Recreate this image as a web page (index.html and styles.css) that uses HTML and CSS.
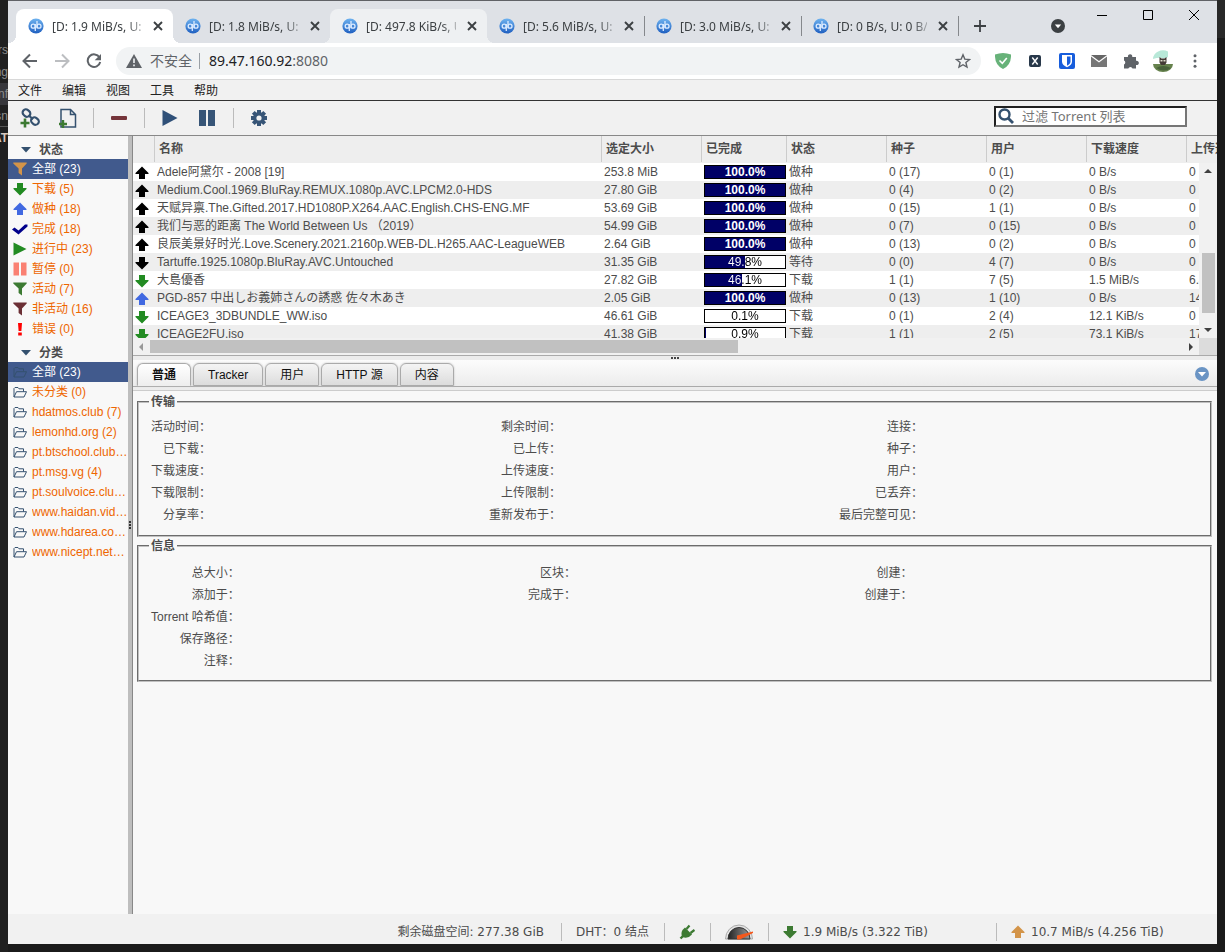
FILE: index.html
```
<!DOCTYPE html>
<html lang="zh-CN">
<head>
<meta charset="utf-8">
<title>[D: 1.9 MiB/s, U: 10.7 MiB/s] qBittorrent</title>
<link rel="stylesheet" href="styles.css">
</head>
<body>
<svg class="defs" aria-hidden="true">
  <defs>
    <linearGradient id="qbg" x1="0" y1="0" x2="0" y2="1"><stop offset="0" stop-color="#6fb3f0"/><stop offset="1" stop-color="#1f5fc0"/></linearGradient>
    <linearGradient id="dial" x1="0" y1="0" x2="1" y2="0"><stop offset="0" stop-color="#222"/><stop offset="1" stop-color="#999"/></linearGradient>
  </defs>
  <symbol id="qb" viewBox="0 0 16 16"><circle cx="8" cy="8" r="7.6" fill="url(#qbg)"/><g fill="none" stroke="#dcebff" stroke-width="1.3"><circle cx="5.2" cy="8.2" r="2"/><path d="M7.3 6v7M9 3v7.2"/><circle cx="11" cy="8.2" r="2"/></g></symbol>
  <symbol id="x" viewBox="0 0 16 16"><path d="M4 4l8 8M12 4l-8 8" stroke="#3c4043" stroke-width="1.9"/></symbol>
  <symbol id="up" viewBox="0 0 14 14"><path d="M7 .5L13.5 7V8H10v5H4V8H.5V7z" fill="currentColor"/></symbol>
  <symbol id="down" viewBox="0 0 14 14"><path d="M7 13.5L13.5 7V6H10V1H4v5H.5v1z" fill="currentColor"/></symbol>
  <symbol id="funnel" viewBox="0 0 14 14"><path d="M.3.5h13.4v1L9 6.5v7L5.6 11V6.500L.3 1.500z" fill="currentColor"/></symbol>
  <symbol id="folder" viewBox="0 0 14 14"><path d="M1 12V3.500l1-1h3l1 1.300h4.500V6.500M1 12l2.500-5.300H13.500L11 12z" fill="none" stroke="currentColor" stroke-width="1"/></symbol>
  <symbol id="tri" viewBox="0 0 10 6"><path d="M0 0h10L5 5.500z" fill="#34516f"/></symbol>
</svg>

<aside class="behind left" aria-hidden="true">
  <span>rs</span><span>ng</span><span class="lit">nf</span><span class="line">sn</span><b>AT</b>
</aside>

<div class="window">
  <header class="tabstrip">
    <nav class="browser-tabs" aria-label="标签页">
      <div class="btab current"><svg class="fav"><use href="#qb"/></svg><span>[D: 1.9 MiB/s, U: 10.7 MiB/s]</span><button aria-label="关闭"><svg><use href="#x"/></svg></button></div>
      <div class="btab"><svg class="fav"><use href="#qb"/></svg><span>[D: 1.8 MiB/s, U: 1.2 MiB/s]</span><button aria-label="关闭"><svg><use href="#x"/></svg></button></div>
      <div class="btab hover"><svg class="fav"><use href="#qb"/></svg><span>[D: 497.8 KiB/s, U: 1.0 MiB/s]</span><button aria-label="关闭"><svg><use href="#x"/></svg></button></div>
      <div class="btab ruled"><svg class="fav"><use href="#qb"/></svg><span>[D: 5.6 MiB/s, U: 1.2 MiB/s]</span><button aria-label="关闭"><svg><use href="#x"/></svg></button></div>
      <div class="btab ruled"><svg class="fav"><use href="#qb"/></svg><span>[D: 3.0 MiB/s, U: 1.2 MiB/s]</span><button aria-label="关闭"><svg><use href="#x"/></svg></button></div>
      <div class="btab ruled"><svg class="fav"><use href="#qb"/></svg><span>[D: 0 B/s, U: 0 B/s]</span><button aria-label="关闭"><svg><use href="#x"/></svg></button></div>
      <button class="newtab" aria-label="新标签页"><svg viewBox="0 0 14 14"><path d="M7 1v12M1 7h12" stroke="#3c4043" stroke-width="1.800"/></svg></button>
    </nav>
    <div class="wincontrols">
      <button class="search-tabs" aria-label="搜索标签页"><svg viewBox="0 0 14 14"><circle cx="7" cy="7" r="7" fill="#3c4043"/><path d="M3.800 5.500h6.400L7 9.300z" fill="#fff"/></svg></button>
      <button aria-label="最小化"><svg viewBox="0 0 10 10"><path d="M0 5.500h10" stroke="#000"/></svg></button>
      <button aria-label="最大化"><svg viewBox="0 0 10 10"><path d="M.5.5h9v9h-9z" fill="none" stroke="#000"/></svg></button>
      <button aria-label="关闭窗口"><svg viewBox="0 0 10 10"><path d="M0 0l10 10M10 0L0 10" stroke="#000"/></svg></button>
    </div>
  </header>

  <div class="navbar">
    <button aria-label="后退"><svg viewBox="0 0 16 16"><path d="M15 8H2M8 1.500L1.500 8 8 14.500" fill="none" stroke="#5f6368" stroke-width="2"/></svg></button>
    <button aria-label="前进"><svg viewBox="0 0 16 16"><path d="M1 8h13M8 1.500L14.500 8 8 14.500" fill="none" stroke="#bcbec1" stroke-width="2"/></svg></button>
    <button aria-label="重新加载"><svg viewBox="0 0 16 16"><path d="M13.500 4.500A6.300 6.300 0 1 0 14.200 9" fill="none" stroke="#5f6368" stroke-width="2"/><path d="M15 1v6.300H8.700z" fill="#5f6368"/></svg></button>
    <div class="omnibox">
      <svg class="warn" viewBox="0 0 16 14"><path d="M8 0l8 14H0z" fill="#5f6368"/><path d="M8 4.500v4.500M8 10.500v1.800" stroke="#f1f3f4" stroke-width="1.600"/></svg>
      <span class="insecure">不安全</span>
      <span class="url">89.47.160.92<i>:8080</i></span>
      <button aria-label="加入书签"><svg viewBox="0 0 16 16"><path d="M8 1.800l1.800 4.300 4.700.4-3.600 3 1.100 4.600L8 11.700l-4 2.400 1.100-4.600-3.600-3 4.700-.4z" fill="none" stroke="#5f6368" stroke-width="1.400"/></svg></button>
    </div>
    <div class="extensions">
      <button aria-label="AdGuard"><svg viewBox="0 0 16 16"><path d="M0 1.500Q4 .3 8 0q4 .3 8 1.500Q16.500 12 8 16-.5 12 0 1.500z" fill="#67b279"/><path d="M4.500 7.500L7.300 10.300 11.800 5" fill="none" stroke="#fff" stroke-width="1.600"/></svg></button>
      <button aria-label="X"><svg viewBox="0 0 16 16"><rect x="2" y="2" width="12" height="12" rx="2" fill="#28384a"/><path d="M5.300 4.500l5.400 7M10.700 4.500l-5.400 7" stroke="#fff" stroke-width="1.400"/></svg></button>
      <button aria-label="Bitwarden"><svg viewBox="0 0 16 16"><rect width="16" height="16" rx="2" fill="#175ddc"/><path d="M3 2h10v6.500q0 3.500-5 5.800-5-2.300-5-5.800z" fill="#fff"/><path d="M8 3.600h3.500v5Q11.500 11 8 12.700z" fill="#175ddc"/></svg></button>
      <button aria-label="邮件"><svg viewBox="0 0 16 16"><path d="M0 2h16L8 8z" fill="#666"/><path d="M0 3.500L8 9.500l8-6V14H0z" fill="#777"/></svg></button>
      <button aria-label="扩展程序"><svg viewBox="0 0 16 16"><path d="M1 4h4a2.200 2.200 0 1 1 4.200 0H13v3.800a2.200 2.200 0 1 1 0 4.200v3.500H9.500a2.200 2.200 0 0 0-4.200 0H1v-4a2.200 2.200 0 0 0 0-4z" fill="#5f6368"/></svg></button>
      <button class="profile" aria-label="个人资料"><svg viewBox="0 0 22 22"><path d="M1 9A10 9 0 0 1 16 1.500L16 7q-3 2-6 1T1 9z" fill="#b8e8d8"/><path d="M1 14h20a10 8 0 0 1-20 0z" fill="#66824d"/><path d="M4 18q7-4 15 0-7 5-15 0z" fill="#48623a"/><path d="M7.500 7l2 1.500h3L14.500 7v5.500L13 15H9l-1.500-2.500z" fill="#443b36"/><path d="M8.500 10h2v1.500h-2zM11.500 10h2v1.500h-2z" fill="#ddc"/></svg></button>
      <button aria-label="菜单"><svg viewBox="0 0 16 16"><g fill="#5f6368"><circle cx="8" cy="2.800" r="1.500"/><circle cx="8" cy="8" r="1.500"/><circle cx="8" cy="13.200" r="1.500"/></g></svg></button>
    </div>
  </div>

  <nav class="menubar">
    <a href="#file">文件</a><a href="#edit">编辑</a><a href="#view">视图</a><a href="#tools">工具</a><a href="#help">帮助</a>
  </nav>

  <div class="toolbar">
    <button aria-label="添加 Torrent 链接"><svg viewBox="0 0 20 20"><g fill="none" stroke="#34516f" stroke-width="2.200"><rect x="2.500" y="1.800" width="8" height="6.500" rx="3.200" transform="rotate(40 6.500 5)"/><rect x="11" y="9.800" width="8" height="6.500" rx="3.200" transform="rotate(40 15 13)"/><path d="M8.500 7.200l4.500 4"/></g><path d="M5 10.500v9M.5 15h9" stroke="#3c7a32" stroke-width="2.600"/></svg></button>
    <button aria-label="添加 Torrent 文件"><svg viewBox="0 0 20 20"><path d="M3 1.500h9.500l5 5v12.500H3zM12.500 1.500v5h5" fill="none" stroke="#34516f" stroke-width="1.500"/><path d="M5 12v8M1 16h8" stroke="#3c7a32" stroke-width="2.400"/></svg></button>
    <hr>
    <button aria-label="删除"><svg viewBox="0 0 20 20"><rect x="2" y="8" width="16" height="4" rx="1" fill="#75343a"/></svg></button>
    <hr>
    <button aria-label="继续"><svg viewBox="0 0 20 20"><path d="M2.500 2l15 8-15 8z" fill="#2f5078"/></svg></button>
    <button aria-label="暂停"><svg viewBox="0 0 20 20"><path d="M1 2h7v16H1zM10 2h7v16h-7z" fill="#375577"/></svg></button>
    <hr>
    <button aria-label="选项"><svg viewBox="0 0 20 20"><g stroke="#375577" stroke-width="4"><path d="M10 2v16M2 10h16M4.300 4.300l11.400 11.400M15.700 4.300L4.300 15.700"/></g><circle cx="10" cy="10" r="6" fill="#375577"/><circle cx="10" cy="10" r="2.600" fill="#f1f1f1"/></svg></button>
    <label class="search"><svg viewBox="0 0 16 16"><circle cx="6.500" cy="6.500" r="5" fill="none" stroke="#34516f" stroke-width="2.400"/><path d="M10 10l5 5" stroke="#34516f" stroke-width="2.800"/></svg><input type="text" placeholder="过滤 Torrent 列表" aria-label="过滤 Torrent 列表"></label>
  </div>

  <main class="desktop">
    <aside class="filters">
      <h2><svg><use href="#tri"/></svg>状态</h2>
      <ul>
        <li class="selected"><a href="#all"><svg class="amber"><use href="#funnel"/></svg><span>全部 (23)</span></a></li>
        <li><a href="#downloading"><svg class="green"><use href="#down"/></svg><span>下载 (5)</span></a></li>
        <li><a href="#seeding"><svg class="blue"><use href="#up"/></svg><span>做种 (18)</span></a></li>
        <li><a href="#completed"><svg viewBox="0 0 14 14"><path d="M-1 7.500l2.500-2L5.500 8.500 12 2.500h2.500v2L5.500 12.500z" fill="#00008b"/></svg><span>完成 (18)</span></a></li>
        <li><a href="#resumed"><svg viewBox="0 0 14 14"><path d="M.5.5L13.500 7 .5 13.500z" fill="#228b22"/></svg><span>进行中 (23)</span></a></li>
        <li><a href="#paused"><svg viewBox="0 0 14 14"><path d="M.5.500h5.500v13H.5zM8 .5h5.500v13H8z" fill="#fa8072"/></svg><span>暂停 (0)</span></a></li>
        <li><a href="#active"><svg class="moss"><use href="#funnel"/></svg><span>活动 (7)</span></a></li>
        <li><a href="#inactive"><svg class="wine"><use href="#funnel"/></svg><span>非活动 (16)</span></a></li>
        <li><a href="#errored"><svg viewBox="0 0 14 14"><path d="M5 1h4l-.6 8H5.600zM5.200 10.500h3.600v3H5.200z" fill="#f00"/></svg><span>错误 (0)</span></a></li>
      </ul>
      <h2><svg><use href="#tri"/></svg>分类</h2>
      <ul>
        <li class="selected"><a href="#cat-all"><svg class="slate"><use href="#folder"/></svg><span>全部 (23)</span></a></li>
        <li><a href="#cat-none"><svg class="slate"><use href="#folder"/></svg><span>未分类 (0)</span></a></li>
        <li><a href="#c1"><svg class="slate"><use href="#folder"/></svg><span>hdatmos.club (7)</span></a></li>
        <li><a href="#c2"><svg class="slate"><use href="#folder"/></svg><span>lemonhd.org (2)</span></a></li>
        <li><a href="#c3"><svg class="slate"><use href="#folder"/></svg><span>pt.btschool.club (1)</span></a></li>
        <li><a href="#c4"><svg class="slate"><use href="#folder"/></svg><span>pt.msg.vg (4)</span></a></li>
        <li><a href="#c5"><svg class="slate"><use href="#folder"/></svg><span>pt.soulvoice.club (1)</span></a></li>
        <li><a href="#c6"><svg class="slate"><use href="#folder"/></svg><span>www.haidan.video (4)</span></a></li>
        <li><a href="#c7"><svg class="slate"><use href="#folder"/></svg><span>www.hdarea.co (2)</span></a></li>
        <li><a href="#c8"><svg class="slate"><use href="#folder"/></svg><span>www.nicept.net (2)</span></a></li>
      </ul>
    </aside>
    <div class="vsplit"><i></i><i></i><i></i></div>

    <section class="content">
      <div class="list">
        <div class="head">
          <table class="torrents">
            <colgroup><col class="c-icon"><col class="c-name"><col class="c-std"><col class="c-done"><col class="c-std"><col class="c-std"><col class="c-std"><col class="c-std"><col class="c-std"></colgroup>
            <thead><tr><th></th><th>名称</th><th>选定大小</th><th>已完成</th><th>状态</th><th>种子</th><th>用户</th><th>下载速度</th><th>上传速度</th></tr></thead>
          </table>
        </div>
        <div class="rows">
          <table class="torrents">
            <colgroup><col class="c-icon"><col class="c-name"><col class="c-std"><col class="c-done"><col class="c-std"><col class="c-std"><col class="c-std"><col class="c-std"><col class="c-std"></colgroup>
            <tbody>
              <tr><td><svg><use href="#up"/></svg></td><td>Adele阿黛尔 - 2008 [19]</td><td>253.8 MiB</td><td><div class="bar full"><span>100.0%</span></div></td><td>做种</td><td>0 (17)</td><td>0 (1)</td><td>0 B/s</td><td>0 B/s</td></tr>
              <tr><td><svg><use href="#up"/></svg></td><td>Medium.Cool.1969.BluRay.REMUX.1080p.AVC.LPCM2.0-HDS</td><td>27.80 GiB</td><td><div class="bar full"><span>100.0%</span></div></td><td>做种</td><td>0 (4)</td><td>0 (2)</td><td>0 B/s</td><td>0 B/s</td></tr>
              <tr><td><svg><use href="#up"/></svg></td><td>天赋异禀.The.Gifted.2017.HD1080P.X264.AAC.English.CHS-ENG.MF</td><td>53.69 GiB</td><td><div class="bar full"><span>100.0%</span></div></td><td>做种</td><td>0 (15)</td><td>1 (1)</td><td>0 B/s</td><td>0 B/s</td></tr>
              <tr><td><svg><use href="#up"/></svg></td><td>我们与恶的距离 The World Between Us （2019）</td><td>54.99 GiB</td><td><div class="bar full"><span>100.0%</span></div></td><td>做种</td><td>0 (7)</td><td>0 (15)</td><td>0 B/s</td><td>0 B/s</td></tr>
              <tr><td><svg><use href="#up"/></svg></td><td>良辰美景好时光.Love.Scenery.2021.2160p.WEB-DL.H265.AAC-LeagueWEB</td><td>2.64 GiB</td><td><div class="bar full"><span>100.0%</span></div></td><td>做种</td><td>0 (13)</td><td>0 (2)</td><td>0 B/s</td><td>0 B/s</td></tr>
              <tr><td><svg><use href="#down"/></svg></td><td>Tartuffe.1925.1080p.BluRay.AVC.Untouched</td><td>31.35 GiB</td><td><div class="bar" style="--p:49.8%"><span>49.8%</span></div></td><td>等待</td><td>0 (0)</td><td>4 (7)</td><td>0 B/s</td><td>0 B/s</td></tr>
              <tr><td><svg class="green"><use href="#down"/></svg></td><td>大島優香</td><td>27.82 GiB</td><td><div class="bar" style="--p:46.1%"><span>46.1%</span></div></td><td>下载</td><td>1 (1)</td><td>7 (5)</td><td>1.5 MiB/s</td><td>6.4 KiB/s</td></tr>
              <tr><td><svg class="blue"><use href="#up"/></svg></td><td>PGD-857 中出しお義姉さんの誘惑 佐々木あき</td><td>2.05 GiB</td><td><div class="bar full"><span>100.0%</span></div></td><td>做种</td><td>0 (13)</td><td>1 (10)</td><td>0 B/s</td><td>14.2 KiB/s</td></tr>
              <tr><td><svg class="green"><use href="#down"/></svg></td><td>ICEAGE3_3DBUNDLE_WW.iso</td><td>46.61 GiB</td><td><div class="bar" style="--p:0.1%"><span>0.1%</span></div></td><td>下载</td><td>0 (1)</td><td>2 (4)</td><td>12.1 KiB/s</td><td>0 B/s</td></tr>
              <tr><td><svg class="green"><use href="#down"/></svg></td><td>ICEAGE2FU.iso</td><td>41.38 GiB</td><td><div class="bar" style="--p:0.9%"><span>0.9%</span></div></td><td>下载</td><td>1 (1)</td><td>2 (5)</td><td>73.1 KiB/s</td><td>17.5 KiB/s</td></tr>
            </tbody>
          </table>
        </div>
        <div class="vscroll"><svg viewBox="0 0 8 4"><path d="M0 4h8L4 0z" fill="#404040"/></svg><div class="track"><i></i></div><svg viewBox="0 0 8 4"><path d="M0 0h8L4 4z" fill="#404040"/></svg></div>
        <div class="hscroll"><svg viewBox="0 0 4 8"><path d="M4 0v8L0 4z" fill="#999"/></svg><div class="track"><i></i></div><svg viewBox="0 0 4 8"><path d="M0 0v8l4-4z" fill="#404040"/></svg></div>
        <div class="corner"></div>
      </div>
      <div class="hsplit"><i></i><i></i><i></i></div>
      <div class="tabs">
        <button class="on">普通</button><button>Tracker</button><button>用户</button><button>HTTP 源</button><button>内容</button>
        <button class="collapse" aria-label="折叠"><svg viewBox="0 0 14 14"><circle cx="7" cy="7" r="7" fill="#6a94c4"/><path d="M3 5h8L7 9.500z" fill="#fff"/></svg></button>
      </div>
      <div class="props">
        <fieldset>
          <legend>传输</legend>
          <dl>
            <dt>活动时间：</dt><dd></dd><dt>剩余时间：</dt><dd></dd><dt>连接：</dt><dd></dd>
            <dt>已下载：</dt><dd></dd><dt>已上传：</dt><dd></dd><dt>种子：</dt><dd></dd>
            <dt>下载速度：</dt><dd></dd><dt>上传速度：</dt><dd></dd><dt>用户：</dt><dd></dd>
            <dt>下载限制：</dt><dd></dd><dt>上传限制：</dt><dd></dd><dt>已丢弃：</dt><dd></dd>
            <dt>分享率：</dt><dd></dd><dt>重新发布于：</dt><dd></dd><dt>最后完整可见：</dt><dd></dd>
          </dl>
        </fieldset>
        <fieldset>
          <legend>信息</legend>
          <dl>
            <dt>总大小：</dt><dd></dd><dt>区块：</dt><dd></dd><dt>创建：</dt><dd></dd>
            <dt>添加于：</dt><dd></dd><dt>完成于：</dt><dd></dd><dt>创建于：</dt><dd></dd>
            <dt class="first">Torrent 哈希值：</dt><dd></dd>
            <dt class="first">保存路径：</dt><dd></dd>
            <dt class="first">注释：</dt><dd></dd>
          </dl>
        </fieldset>
      </div>
    </section>
  </main>

  <footer class="status">
    <span class="free">剩余磁盘空间: 277.38 GiB</span>
    <span>DHT：0 结点</span>
    <span><svg class="plug moss" viewBox="0 0 16 16"><path d="M1.500 14.500l3-3" stroke="currentColor" stroke-width="2.400"/><path d="M3 12.500Q1 7.500 6 3.500l7 7q-4.500 5-9.500 2.500z" fill="currentColor"/><path d="M7.500 5l3-3.500M11.500 9l4-3" stroke="currentColor" stroke-width="2.200"/></svg></span>
    <span><svg class="gauge" viewBox="0 0 28 16"><path d="M.5 15a13.500 14 0 0 1 27 0z" fill="#e4e4e4" stroke="#aaa"/><path d="M3 15a11 11.500 0 0 1 22 0z" fill="url(#dial)" stroke="#333"/><path d="M12 11.500L28 7.500v1.500L15 15.500h-3z" fill="#f4581c"/></svg></span>
    <span class="speed"><svg class="moss"><use href="#down"/></svg>1.9 MiB/s (3.322 TiB)</span>
    <span class="speed"><svg class="amber"><use href="#up"/></svg>10.7 MiB/s (4.256 TiB)</span>
  </footer>
</div>
<aside class="behind right" aria-hidden="true"></aside>
</body>
</html>
```

FILE: styles.css
```
* { box-sizing: border-box; }
body {
  margin: 0;
  min-height: 100vh;
  display: grid;
  grid-template-columns: 8px minmax(0, 1fr) 8px;
  background: #1b1b1b;
  font: 12px/18px "Liberation Sans", "Noto Sans CJK SC", sans-serif;
  color: #4c4c4c;
}
button { border: 0; padding: 0; margin: 0; background: none; font: inherit; color: inherit; display: flex; align-items: center; justify-content: center; }
a { color: inherit; text-decoration: none; }
svg { display: block; flex: none; }
.defs { position: absolute; width: 0; height: 0; }
.green { color: #228b22; }
.blue { color: #4169e1; }
.amber { color: #d39449; }
.moss { color: #3c7a32; }
.wine { color: #6b2f35; }
.slate { color: #34516f; }

/* strips of the window behind */
.behind.left { padding-top: 39px; background: #202020; overflow: hidden; color: #8c8c8c; line-height: 22px; }
.behind.left > * { display: flex; justify-content: flex-end; height: 22px; }
.behind .lit { background: #37373b; }
.behind .line { border-bottom: 1px solid #555; }
.behind b { color: #d6c7bd; }
.behind.right { background: linear-gradient(#282828 38px, #1a1a1a 38px); }

.window { display: flex; flex-direction: column; margin-bottom: 8px; background: #f8f8f8; border-top: 1px solid #606266; }

/* browser tabs */
.tabstrip { display: flex; justify-content: space-between; height: 42px; background: #dee1e6; font: 12px/18px "Noto Sans", "Noto Sans CJK SC", sans-serif; color: #3c4043; }
.browser-tabs { display: flex; align-items: flex-end; padding-left: 8px; min-width: 0; }
.btab { position: relative; display: flex; align-items: center; gap: 8px; width: 157px; height: 34px; padding: 0 7px 0 12px; border-radius: 8px 8px 0 0; }
.fav { width: 16px; height: 16px; }
.btab span { flex: 1; min-width: 0; padding-top: 2px; overflow: hidden; white-space: nowrap; mask-image: linear-gradient(90deg, #000 75px, transparent 98px); }
.btab button svg { width: 16px; height: 16px; }
.current { background: #fff; }
.hover { background: #eef0f2; }
.current::before, .current::after, .hover::after, .hover::before { content: ""; position: absolute; bottom: 0; width: 8px; height: 8px; }
.current::before { left: -8px; background: radial-gradient(circle at 0 0, transparent 8px, #fff 8px); }
.current::after { right: -8px; background: radial-gradient(circle at 100% 0, transparent 8px, #fff 8px); }
.hover::before { left: -8px; background: radial-gradient(circle at 0 0, transparent 8px, #eef0f2 8px); }
.hover::after { right: -8px; background: radial-gradient(circle at 100% 0, transparent 8px, #eef0f2 8px); }
.ruled::after { content: ""; position: absolute; right: -1px; top: 7px; width: 1px; height: 20px; background: #85888c; }
.newtab { width: 44px; height: 34px; }
.newtab svg { width: 14px; height: 14px; }
.wincontrols { display: flex; height: 28px; }
.wincontrols button { width: 46px; }
.wincontrols svg { width: 10px; height: 10px; }
.wincontrols .search-tabs { height: 50px; width: 42px; }
.wincontrols .search-tabs svg { width: 14px; height: 14px; }

/* address bar */
.navbar { display: flex; align-items: center; height: 37px; padding: 0 6px; background: #fff; border-bottom: 1px solid #d8d8d8; font: 14px/20px "Noto Sans", "Noto Sans CJK SC", sans-serif; color: #5f6368; }
.navbar button { width: 32px; height: 28px; }
.navbar svg { width: 16px; height: 16px; }
.omnibox { flex: 1; display: flex; align-items: center; height: 28px; margin: 0 6px 0 6px; padding: 0 2px 0 10px; border-radius: 14px; background: #f1f3f4; }
.navbar .warn { height: 14px; margin-right: 8px; }
.insecure { padding-right: 7px; margin-right: 9px; line-height: 16px; border-right: 1px solid #9aa0a6; }
.url { flex: 1; color: #202124; }
.url i { font-style: normal; color: #5f6368; }
.extensions { display: flex; }
.navbar .profile svg { width: 22px; height: 22px; }

/* application menu */
.menubar { display: flex; height: 21px; background: #f1f1f1; border-bottom: 1px solid #333; color: #222; line-height: 22px; }
.menubar a { padding: 0 10px; }
.toolbar { display: flex; align-items: center; height: 35px; padding: 0 30px 0 3px; background: #f1f1f1; border-bottom: 1px solid #888; }
.toolbar button { width: 38px; height: 28px; }
.toolbar button svg { width: 20px; height: 20px; }
.toolbar hr { width: 1px; height: 20px; margin: 0 6px; border: 0; background: #bbb; }
.search { display: flex; align-items: center; width: 193px; height: 21px; margin-left: auto; padding-left: 2px; gap: 8px; margin-bottom: 4px; background: #fff; border: 2px inset #767676; }
.search svg { width: 16px; height: 16px; }
.search input { flex: 1; min-width: 0; height: 17px; padding: 0; border: 0; outline: 0; background: none; font: 13px/17px "Noto Sans", "Noto Sans CJK SC", sans-serif; }
.search input::placeholder { color: #757575; }

.desktop { flex: 1; display: flex; min-height: 0; }

/* filters */
.filters { width: 120px; background: #f8f8f8; }
.filters h2 { display: flex; align-items: center; gap: 8px; height: 23px; margin: 0; padding: 4px 0 0 13px; font-size: 12px; }
.filters h2 svg { width: 10px; height: 6px; }
.filters ul { margin: 0; padding: 0; list-style: none; color: #e60; }
.filters a { display: flex; align-items: center; gap: 5px; height: 20px; padding-left: 5px; }
.filters a svg { width: 14px; height: 14px; overflow: visible; }
.filters span { overflow: hidden; text-overflow: ellipsis; white-space: nowrap; line-height: 18px; padding-bottom: 1px; }
.filters .selected { background: #415a8d; color: #fff; }
.vsplit { display: flex; flex-direction: column; justify-content: center; align-items: center; gap: 1px; width: 5px; background: #bebebe; border-right: 1px solid #888; }
.vsplit i { width: 2px; height: 2px; background: #333; }

/* torrent list */
.content { flex: 1; min-width: 0; display: flex; flex-direction: column; }
.list { display: grid; grid-template: 27px 175px 17px / minmax(0, 1fr) 18px; border-bottom: 1px solid #aaa; }
.head { grid-column: 1 / 3; overflow: hidden; background: #eee; }
.rows { overflow: hidden; background: #fff; }
.torrents { table-layout: fixed; width: 1154px; border-collapse: separate; border-spacing: 0; white-space: nowrap; }
.c-icon { width: 22px; }
.c-name { width: 447px; }
.c-done { width: 85px; }
.c-std { width: 100px; }
.torrents th { height: 26px; padding: 0 4px; text-align: left; overflow: hidden; border-right: 1px solid #ccc; }
.torrents td { height: 18px; padding: 0 2px; line-height: 18px; overflow: hidden; }
.torrents tr:nth-child(even) { background: #eee; }
.torrents td svg { width: 14px; height: 14px; margin-top: 2px; color: #000; }
.torrents td svg.green { color: #228b22; }
.torrents td svg.blue { color: #4169e1; }
.bar { width: 82px; height: 14px; border: 1px solid #000; background: linear-gradient(90deg, #006 var(--p), #fff var(--p)); line-height: 12px; text-align: center; }
.bar span { display: block; color: transparent; background: linear-gradient(90deg, #fff var(--p), #000 var(--p)); background-clip: text; -webkit-background-clip: text; }
.bar.full { background: #006; font-weight: bold; }
.bar.full span { background: none; color: #fff; }
.vscroll, .hscroll { display: flex; align-items: center; background: #f1f1f1; }
.vscroll { flex-direction: column; padding: 6px 0; }
.vscroll svg { width: 8px; height: 4px; }
.hscroll { padding: 0 6px; }
.hscroll svg { width: 4px; height: 8px; }
.vscroll .track { flex: 1; width: 13px; margin: 6px 0; padding-top: 74px; }
.vscroll .track i { display: block; height: 60px; background: #c1c1c1; }
.hscroll .track { flex: 1; margin: 0 7px; }
.hscroll .track i { display: block; width: 57%; height: 13px; background: #c1c1c1; }
.corner { background: #dcdcdc; }
.hsplit { display: flex; justify-content: center; align-items: center; gap: 1px; height: 4px; background: #ececec; }
.hsplit i { width: 2px; height: 2px; background: #444; }

/* property tabs */
.tabs { display: flex; align-items: flex-end; gap: 2px; height: 31px; padding: 0 8px 4px 4px; background: linear-gradient(#fcfcfc, #ececec 26px, #aaa 26px, #aaa 27px, #ececec 27px); border-bottom: 1px solid #ccc; color: #111; }
.tabs button { height: 23px; padding: 1px 14px 0; border: 1px solid #aaa; border-radius: 6px 6px 0 0; background: linear-gradient(#f4f4f4, #dcdcdc); box-shadow: 0 0 2px #bbb; }
.tabs .on { background: linear-gradient(#fff, #eee); border-bottom-color: #eee; font-weight: bold; }
.tabs .collapse { height: 14px; padding: 0; border: 0; margin: 0 0 5px auto; background: none; box-shadow: none; }
.collapse svg { width: 14px; height: 14px; }

.props { flex: 1; padding: 2px 5px 0 4px; }
fieldset { margin: 0; padding: 5px 9px 9px 12px; border: 2px groove #c0c0c0; }
legend { margin-left: -2px; padding: 0 2px; font-weight: bold; line-height: 18px; }
fieldset + fieldset { padding-top: 7px; padding-bottom: 8px; }
dl { display: grid; grid-template-columns: auto 1fr auto 1fr auto 1fr; margin: 0; line-height: 22px; }
dt { text-align: right; white-space: nowrap; }
dd { margin: 0; }
.first { grid-column: 1; }

/* status bar */
.status { display: flex; justify-content: flex-end; align-items: center; height: 30px; padding-top: 5px; background: #f1f1f1; font-family: "DejaVu Sans", "Noto Sans CJK SC", sans-serif; white-space: nowrap; }
.status span { display: flex; align-items: center; height: 18px; padding: 0 15px; }
.status span + span { border-left: 1px solid #bbb; padding-left: 14px; }
.status .free { padding-right: 17px; }
.status .plug { width: 16px; height: 16px; }
.status .gauge { width: 28px; height: 16px; }
.status .speed { width: 228px; gap: 6px; }
.status .speed:last-child { width: 221px; }
.speed svg { width: 14px; height: 14px; }
```
